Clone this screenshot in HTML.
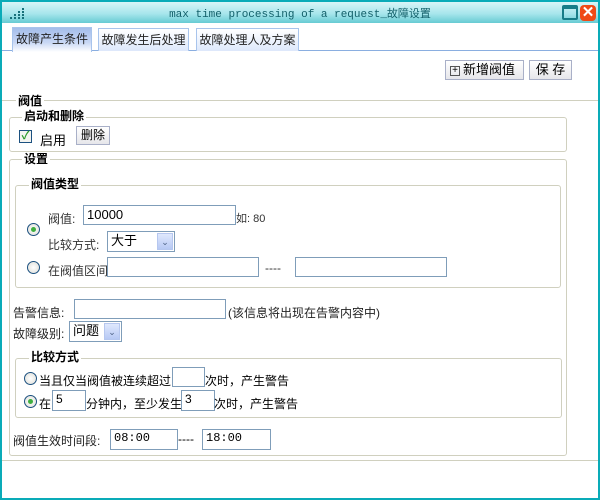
<!DOCTYPE html>
<html><head><meta charset="utf-8"><style>
*{margin:0;padding:0;box-sizing:border-box}
body{width:600px;height:500px;background:#0aabb8;position:relative;overflow:hidden;font-family:"Liberation Sans","Noto Sans CJK SC",sans-serif;font-size:12px;color:#000;white-space:nowrap}
.a{position:absolute}
#win{position:absolute;left:2px;top:2px;width:596px;height:496px;background:#fff}
#tb{position:absolute;left:0;top:0;width:596px;height:21px;background:linear-gradient(#d8f5f8,#a8e6ec 55%,#66cbd3)}
.inp{position:absolute;border:1px solid #7f9db9;background:#fff;font-size:13px;padding-left:3px;line-height:17px}
.fs{position:absolute;border:1px solid #d0d0bf;border-radius:3px}
.lg{position:absolute;background:#fff;font-weight:bold;font-size:12px;padding:0 2px;line-height:14px}
.tab{position:absolute;top:26px;height:23px;border:1px solid #a8c4ec;border-bottom:none;background:linear-gradient(#fff,#dde8fb);font-size:12px;text-align:center;line-height:22px;color:#222;white-space:nowrap}
.rad{position:absolute;width:13px;height:13px;border-radius:50%;border:1px solid #1c5180;background:radial-gradient(#fff,#dcdcd6)}
.rad.on::after{content:"";position:absolute;left:3px;top:3px;width:5px;height:5px;border-radius:50%;background:#3fae3f}
.sel{position:absolute;border:1px solid #7f9db9;background:#fff;font-size:13px;padding-left:3px;line-height:18px}
.sel i{position:absolute;right:1px;top:1px;width:16px;bottom:1px;background:linear-gradient(#dfe8fd,#b7c9f4);border:1px solid #b6c7ef;font-style:normal;color:#4d6185;font-size:9px;text-align:center;line-height:16px}
.btn{position:absolute;border:1px solid #a9b0c8;background:linear-gradient(#fff,#e6e6ea);font-size:13px;line-height:17px}
</style></head><body>
<div id="win">
<div id="tb">
<div class="a" style="left:8px;top:6px;width:14px;height:12px">
<div class="a" style="left:12px;top:0;width:2px;height:2px;background:#17707a"></div>
<div class="a" style="left:12px;top:3px;width:2px;height:2px;background:#17707a"></div><div class="a" style="left:8px;top:3px;width:2px;height:2px;background:#17707a"></div>
<div class="a" style="left:12px;top:6px;width:2px;height:2px;background:#17707a"></div><div class="a" style="left:8px;top:6px;width:2px;height:2px;background:#17707a"></div><div class="a" style="left:4px;top:6px;width:2px;height:2px;background:#17707a"></div>
<div class="a" style="left:12px;top:9px;width:2px;height:2px;background:#17707a"></div><div class="a" style="left:8px;top:9px;width:2px;height:2px;background:#17707a"></div><div class="a" style="left:4px;top:9px;width:2px;height:2px;background:#17707a"></div><div class="a" style="left:0;top:9px;width:2px;height:2px;background:#17707a"></div>
</div>
<div class="a" style="left:0;width:596px;top:3px;text-align:center;font-family:'Liberation Mono','Noto Sans CJK SC',monospace;font-size:11px;color:#13606a">max time processing of a request_故障设置</div>
<div class="a" style="left:560px;top:3px;width:16px;height:15px;border:2px solid #167d88;border-radius:2px;border-top-width:4px"></div>
<div class="a" style="left:578px;top:3px;width:16px;height:16px;border-radius:4px;background:#ef4a16;color:#fff;font-weight:bold;font-size:15px;line-height:16px;text-align:center">✕</div>
</div>
<div class="a" style="left:0;top:48px;width:596px;height:1px;background:#8aaee0"></div>
<div class="tab" style="left:10px;width:80px;height:25px;top:25px;background:linear-gradient(#a4bdea,#c8d7f5 60%,#fff)">故障产生条件</div>
<div class="tab" style="left:96px;width:91px">故障发生后处理</div>
<div class="tab" style="left:194px;width:103px">故障处理人及方案</div>
<div class="btn" style="left:443px;top:58px;width:79px;height:20px;padding-left:17px">新增阀值<span class="a" style="left:4px;top:5px;width:10px;height:10px;border:1px solid #555;font-size:10px;line-height:8px;text-align:center">+</span></div>
<div class="btn" style="left:527px;top:58px;width:43px;height:20px;text-align:center">保 存</div>

<div class="a" style="left:0;top:98px;width:596px;height:1px;background:#d0d0bf"></div>
<div class="a" style="left:0;top:458px;width:596px;height:1px;background:#d0d0bf"></div>
<div class="lg" style="left:14px;top:92px">阀值</div>

<div class="fs" style="left:7px;top:115px;width:558px;height:35px"></div>
<div class="lg" style="left:20px;top:107px">启动和删除</div>
<div class="a" style="left:17px;top:128px;width:13px;height:13px;border:1px solid #1c5180;background:#f4f4f0;color:#2a9a2a;font-size:11px;line-height:11px;text-align:center;font-weight:bold">✓</div>
<div class="a" style="left:38px;top:128px;font-size:13px">启用</div>
<div class="btn" style="left:74px;top:124px;width:34px;height:19px;font-size:12px;text-align:center">删除</div>

<div class="fs" style="left:7px;top:157px;width:558px;height:297px"></div>
<div class="lg" style="left:20px;top:150px">设置</div>

<div class="fs" style="left:13px;top:183px;width:546px;height:103px"></div>
<div class="lg" style="left:27px;top:175px">阀值类型</div>
<div class="rad on" style="left:25px;top:221px"></div>
<div class="a" style="left:46px;top:208px;font-size:12px;color:#333">阀值:</div>
<div class="inp" style="left:81px;top:203px;width:153px;height:20px">10000</div>
<div class="a" style="left:234px;top:208px;font-size:11px;color:#333">如: 80</div>
<div class="a" style="left:46px;top:234px;color:#333">比较方式:</div>
<div class="sel" style="left:105px;top:229px;width:68px;height:21px">大于<i>⌄</i></div>
<div class="rad" style="left:25px;top:259px"></div>
<div class="a" style="left:46px;top:260px;color:#333">在阀值区间</div>
<div class="inp" style="left:105px;top:255px;width:152px;height:20px"></div>
<div class="a" style="left:263px;top:259px;color:#333">----</div>
<div class="inp" style="left:293px;top:255px;width:152px;height:20px"></div>

<div class="a" style="left:11px;top:302px;color:#222">告警信息:</div>
<div class="inp" style="left:72px;top:297px;width:152px;height:20px"></div>
<div class="a" style="left:226px;top:302px;color:#222">(该信息将出现在告警内容中)</div>
<div class="a" style="left:11px;top:323px;color:#222">故障级别:</div>
<div class="sel" style="left:67px;top:319px;width:53px;height:21px">问题<i>⌄</i></div>

<div class="fs" style="left:13px;top:356px;width:547px;height:60px"></div>
<div class="lg" style="left:27px;top:348px">比较方式</div>
<div class="rad" style="left:22px;top:370px"></div>
<div class="a" style="left:37px;top:370px;font-size:12px">当且仅当阀值被连续超过</div>
<div class="inp" style="left:170px;top:365px;width:33px;height:20px"></div>
<div class="a" style="left:203px;top:370px">次时，产生警告</div>
<div class="rad on" style="left:22px;top:393px"></div>
<div class="a" style="left:37px;top:393px">在</div>
<div class="inp" style="left:50px;top:388px;width:34px;height:21px;font-size:12px">5</div>
<div class="a" style="left:84px;top:393px">分钟内，至少发生</div>
<div class="inp" style="left:179px;top:388px;width:34px;height:21px;font-size:12px">3</div>
<div class="a" style="left:212px;top:393px">次时，产生警告</div>

<div class="a" style="left:11px;top:430px;color:#222">阀值生效时间段:</div>
<div class="inp" style="left:108px;top:427px;width:68px;height:21px;font-family:'Liberation Mono',monospace;font-size:12px">08:00</div>
<div class="a" style="left:176px;top:430px">----</div>
<div class="inp" style="left:200px;top:427px;width:69px;height:21px;font-family:'Liberation Mono',monospace;font-size:12px">18:00</div>
</div>
</body></html>
